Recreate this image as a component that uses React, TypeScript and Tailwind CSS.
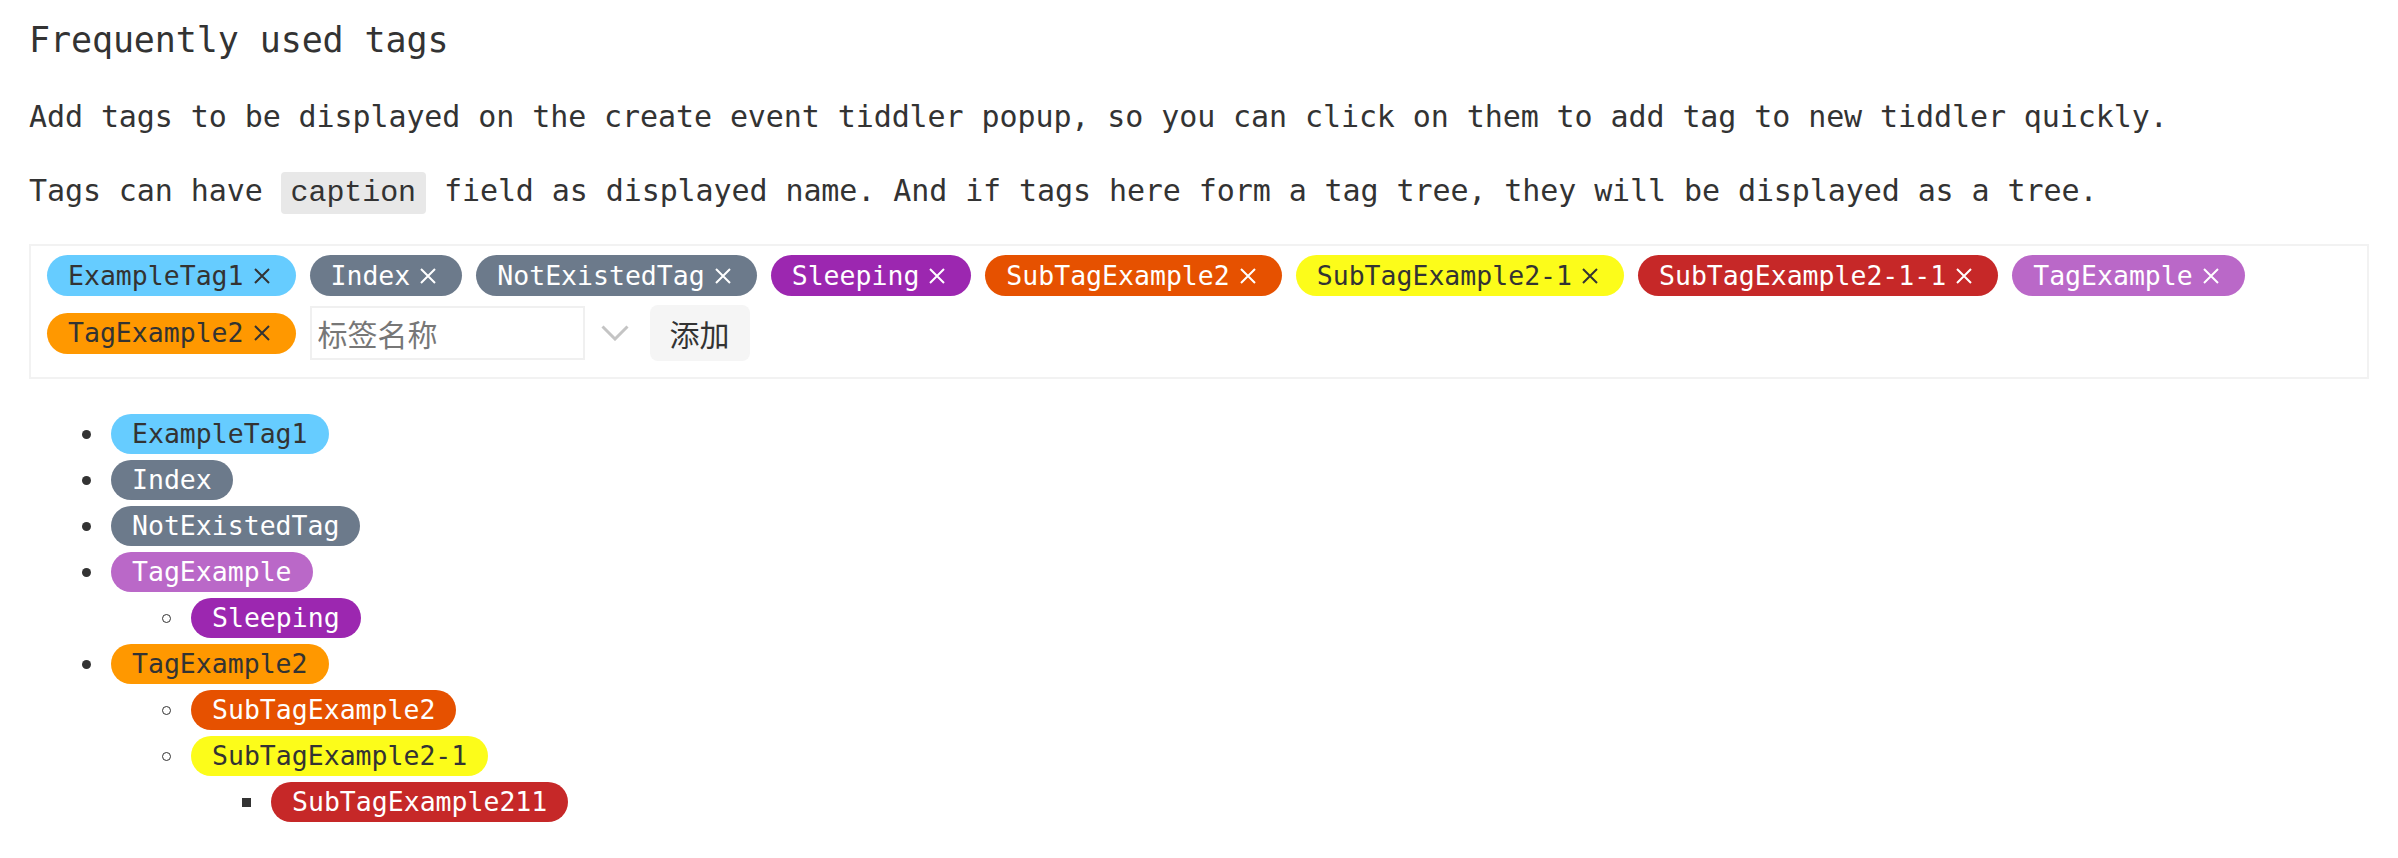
type Tag = { name: string; cls: string };

type TreeNode = Tag & { children?: TreeNode[] };

const mono = "font-['DejaVu_Sans_Mono','Liberation_Mono',monospace]";

const selected: Tag[] = [
    { name: "ExampleTag1", cls: "bg-[#66ccff] text-[#333333]" },
    { name: "Index", cls: "bg-[#6c7a8b] text-white" },
    { name: "NotExistedTag", cls: "bg-[#6c7a8b] text-white" },
    { name: "Sleeping", cls: "bg-[#9c27b0] text-white" },
    { name: "SubTagExample2", cls: "bg-[#e65100] text-white" },
    { name: "SubTagExample2-1", cls: "bg-[#fcfc1a] text-[#333333]" },
    { name: "SubTagExample2-1-1", cls: "bg-[#c62828] text-white" },
    { name: "TagExample", cls: "bg-[#ba68c8] text-white" },
    { name: "TagExample2", cls: "bg-[#ff9800] text-[#333333]" },
];

const tree: TreeNode[] = [
    { name: "ExampleTag1", cls: "bg-[#66ccff] text-[#333333]" },
    { name: "Index", cls: "bg-[#6c7a8b] text-white" },
    { name: "NotExistedTag", cls: "bg-[#6c7a8b] text-white" },
    {
        name: "TagExample",
        cls: "bg-[#ba68c8] text-white",
        children: [{ name: "Sleeping", cls: "bg-[#9c27b0] text-white" }],
    },
    {
        name: "TagExample2",
        cls: "bg-[#ff9800] text-[#333333]",
        children: [
            { name: "SubTagExample2", cls: "bg-[#e65100] text-white" },
            {
                name: "SubTagExample2-1",
                cls: "bg-[#fcfc1a] text-[#333333]",
                children: [{ name: "SubTagExample211", cls: "bg-[#c62828] text-white" }],
            },
        ],
    },
];

function RemovableTag({ tag }: { tag: Tag }) {
    return (
        <span
            className={`inline-flex items-center h-[41px] rounded-full pl-[21px] pr-[26px] text-[26.5px] ${mono} ${tag.cls}`}
        >
            <span>{tag.name}</span>
            <svg className="ml-[10px] w-[16px] h-[16px]" viewBox="0 0 16 16" fill="none">
                <path d="M1 1 L15 15 M15 1 L1 15" stroke="currentColor" strokeWidth="2" />
            </svg>
        </span>
    );
}

function Bullet({ level }: { level: number }) {
    if (level === 0) return <span className="w-[9px] h-[9px] rounded-full bg-[#333333] shrink-0" />;
    if (level === 1)
        return <span className="w-[9px] h-[9px] rounded-full border border-[#333333] shrink-0" />;
    return <span className="w-[9px] h-[9px] bg-[#333333] shrink-0" />;
}

function TreeList({ nodes, level }: { nodes: TreeNode[]; level: number }) {
    return (
        <ul className={level === 0 ? "pl-[53px]" : "pl-[80px]"}>
            {nodes.map((node) => (
                <li key={node.name}>
                    <div className="flex items-center gap-[20px] h-[40px] mb-[6px]">
                        <Bullet level={level} />
                        <span
                            className={`inline-flex items-center h-[40px] rounded-full px-[21px] text-[26.5px] ${mono} ${node.cls}`}
                        >
                            {node.name}
                        </span>
                    </div>
                    {node.children && <TreeList nodes={node.children} level={level + 1} />}
                </li>
            ))}
        </ul>
    );
}

export default function App() {
    return (
        <div className={`min-h-screen bg-white px-[29px] pt-4 text-[#333333] ${mono}`}>
            <h2 className="text-[35px] leading-[48px] font-normal tracking-[-0.1px]">Frequently used tags</h2>
            <p className="mt-[31px] text-[30px] leading-[44px] tracking-[-0.09px]">
                Add tags to be displayed on the create event tiddler popup, so you can click on them to add tag to
                new tiddler quickly.
            </p>
            <p className="mt-[30px] text-[30px] leading-[44px] tracking-[-0.09px]">
                Tags can have <code className="bg-[#e8e8e8] rounded-[4px] px-[10px] py-[4px]">caption</code> field
                as displayed name. And if tags here form a tag tree, they will be displayed as a tree.
            </p>

            <div className="mt-[29px] border-2 border-[#f2f2f2] pl-4 pr-4 pt-[9px] pb-[16px] flex flex-wrap items-center gap-x-[14px] gap-y-[9px]">
                {selected.map((tag) => (
                    <RemovableTag key={tag.name} tag={tag} />
                ))}
                <div className="flex items-center">
                    <input
                        className="w-[275px] h-[54px] border-2 border-[#f0f0f0] pl-[6px] text-[30px] outline-none placeholder:text-[#777777] font-['Noto_Sans_CJK_SC',sans-serif]"
                        placeholder="标签名称"
                    />
                    <svg className="ml-[16px] w-[28px] h-[16px]" viewBox="0 0 28 16" fill="none">
                        <path d="M1.5 1.5 L14 14 L26.5 1.5" stroke="#c4c4c4" strokeWidth="3" />
                    </svg>
                    <button className="ml-[21px] w-[100px] h-[56px] rounded-[8px] bg-[#f5f5f5] text-[30px] text-[#333333] font-['Noto_Sans_CJK_SC',sans-serif]">
                        添加
                    </button>
                </div>
            </div>

            <div className="mt-[35px]">
                <TreeList nodes={tree} level={0} />
            </div>
        </div>
    );
}
